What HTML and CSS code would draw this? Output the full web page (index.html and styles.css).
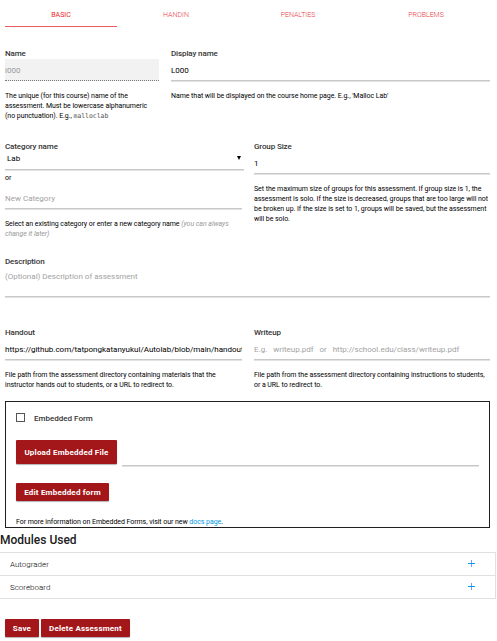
FILE: index.html
```
<!DOCTYPE html>
<html lang="en">
<head>
<meta charset="utf-8">
<title>Edit Assessment</title>
<link rel="stylesheet" href="styles.css">
</head>
<body>
<nav class="tabs">
  <a class="tab active">BASIC</a>
  <a class="tab">HANDIN</a>
  <a class="tab">PENALTIES</a>
  <a class="tab">PROBLEMS</a>
</nav>
<main class="form">
  <section class="row row-name">
    <div class="field">
      <div class="label">Name</div>
      <div class="input disabled">l000</div>
      <p class="help">The unique (for this course) name of the<br>assessment. Must be lowercase alphanumeric<br>(no punctuation). E.g., <code>malloclab</code></p>
    </div>
    <div class="field">
      <div class="label">Display name</div>
      <div class="input">L000</div>
      <p class="help">Name that will be displayed on the course home page. E.g., 'Malloc Lab'</p>
    </div>
  </section>
  <section class="row halves row-category">
    <div class="field">
      <div class="label">Category name</div>
      <div class="select"><span>Lab</span><svg width="4" height="4" viewBox="0 0 4 4"><path d="M0 0H4L2 4Z"/></svg></div>
      <div class="or">or</div>
      <div class="input placeholder category">New Category</div>
      <p class="help">Select an existing category or enter a new category name <i>(you can always<br>change it later)</i></p>
    </div>
    <div class="field">
      <div class="label">Group Size</div>
      <div class="input">1</div>
      <p class="help">Set the maximum size of groups for this assessment. If group size is 1, the<br>assessment is solo. If the size is decreased, groups that are too large will not<br>be broken up. If the size is set to 1, groups will be saved, but the assessment<br>will be solo.</p>
    </div>
  </section>
  <section class="row-description">
    <div class="label">Description</div>
    <div class="input placeholder description">(Optional) Description of assessment</div>
  </section>
  <section class="row halves row-files">
    <div class="field left">
      <div class="label">Handout</div>
      <div class="input">https://github.com/tatpongkatanyukul/Autolab/blob/main/handout</div>
      <p class="help">File path from the assessment directory containing materials that the<br>instructor hands out to students, or a URL to redirect to.</p>
    </div>
    <div class="field">
      <div class="label">Writeup</div>
      <div class="input placeholder">E.g.&nbsp;&nbsp; writeup.pdf&nbsp;&nbsp; or&nbsp;&nbsp; http://school.edu/class/writeup.pdf</div>
      <p class="help">File path from the assessment directory containing instructions to students,<br>or a URL to redirect to.</p>
    </div>
  </section>
  <section class="embedded">
    <div class="check"><span class="box"></span><span class="check-label">Embedded Form</span></div>
    <div class="upload"><a class="btn tall">Upload Embedded File</a><div class="path"></div></div>
    <a class="btn edit">Edit Embedded form</a>
    <p class="help note">For more information on Embedded Forms, visit our new <a class="link">docs page</a>.</p>
  </section>
</main>
<h2 class="heading">Modules Used</h2>
<ul class="modules">
  <li><span>Autograder</span><svg width="7" height="7" viewBox="0 0 7 7"><rect x="3" y="0" width="1" height="7" fill="#6f9ff0"/><rect x="0" y="3" width="7" height="1" fill="#039be5"/></svg></li>
  <li><span>Scoreboard</span><svg width="7" height="7" viewBox="0 0 7 7"><rect x="3" y="0" width="1" height="7" fill="#6f9ff0"/><rect x="0" y="3" width="7" height="1" fill="#039be5"/></svg></li>
</ul>
<footer class="actions"><a class="btn save">Save</a><a class="btn delete">Delete Assessment</a></footer>
</body>
</html>
```

FILE: styles.css
```
* { box-sizing: border-box; }
body { margin: 0; background: #fff; color: #000; font-family: Roboto, sans-serif; font-size: 8px; height: 641px; overflow: hidden; }
p, h2, ul { margin: 0; padding: 0; }
.tabs { display: grid; grid-template-columns: 112px 118px 126px 130px; margin-left: 5px; height: 27px; }
.tab { text-align: center; font-size: 7px; line-height: 30px; height: 27px; color: #e8393f; font-weight: 300; }
.tab.active { color: #ee1c25; border-bottom: 1px solid #ea5b60; font-weight: 400; }
.form { padding: 0 7px 0 5px; }
.row { display: grid; }
.row-name { grid-template-columns: 154px 319px; column-gap: 12px; margin-top: 21px; height: 93px; }
.halves { grid-template-columns: 239px 236px; column-gap: 10px; }
.label { font-size: 8px; line-height: 11px; height: 11px; font-weight: 500; letter-spacing: -0.12px; color: #343434; white-space: nowrap; }
.input { height: 22px; line-height: 23px; font-size: 8px; border-bottom: 1px solid #c8c8c8; box-shadow: 0 1px 0 #e3e3e3; white-space: nowrap; overflow: hidden; }
.input.disabled { background: #f2f2f2; color: #999; border-bottom: 1px dotted #777; box-shadow: none; }
.help { font-size: 7px; line-height: 10px; margin-top: 10px; white-space: nowrap; letter-spacing: -0.055px; color: #000; }
.help code { font-family: "DejaVu Sans Mono", monospace; font-size: 6.5px; color: #555; }
.help i { color: #999; }
.row-category { height: 115px; }
.select { height: 18px; line-height: 13px; padding: 0 2px; display: flex; justify-content: space-between; border-bottom: 1px solid #c8c8c8; box-shadow: 0 1px 0 #e3e3e3; }
.select svg { margin-top: 4px; margin-right: 1px; }
.or { font-size: 7px; line-height: 17px; height: 17px; }
.placeholder { color: #a2a2a2; }
.category { width: 237px; }
.description { height: 30px; line-height: 19px; }
.row-description { height: 71px; }
.row-files { height: 74px; }
.left .input { width: 237px; }
.embedded { width: 485px; height: 127px; border: 1px solid #202020; padding: 11px 10px 0; }
.check { display: flex; height: 27px; gap: 9px; }
.box { width: 9px; height: 9px; border: 1px solid #555; }
.check-label { line-height: 11px; color: #333; font-weight: 500; }
.upload { display: flex; gap: 5px; height: 26px; }
.path { flex: 1; border-bottom: 1px solid #c8c8c8; box-shadow: 0 1px 0 #e3e3e3; }
.btn { display: flex; justify-content: center; align-items: center; height: 18px; background: #a3171b; color: #fff; border-radius: 1px; font-weight: 700; font-size: 8px; letter-spacing: 0.2px; white-space: nowrap; box-shadow: 0 1px 1px rgba(0,0,0,.3); }
.tall { width: 101px; height: 24px; }
.edit { width: 93px; margin-top: 17px; }
.note { margin-top: 16px; }
.link { color: #039be5; }
.heading { font-size: 12px; line-height: 14px; font-weight: 500; height: 24px; padding-top: 5px; color: #202020; }
.modules { list-style: none; width: 496px; border: 1px solid #e0e0e0; border-left: 0; height: 47px; }
.modules li { display: flex; justify-content: space-between; height: 22px; line-height: 23px; padding: 0 20px 0 10px; font-size: 8px; font-weight: 300; }
.modules li + li { border-top: 1px solid #e0e0e0; height: 23px; }
.modules svg { margin-top: 7px; }
.actions { display: flex; gap: 2px; margin: 20px 0 0 5px; }
.save { width: 34px; }
.delete { width: 89px; }
```
